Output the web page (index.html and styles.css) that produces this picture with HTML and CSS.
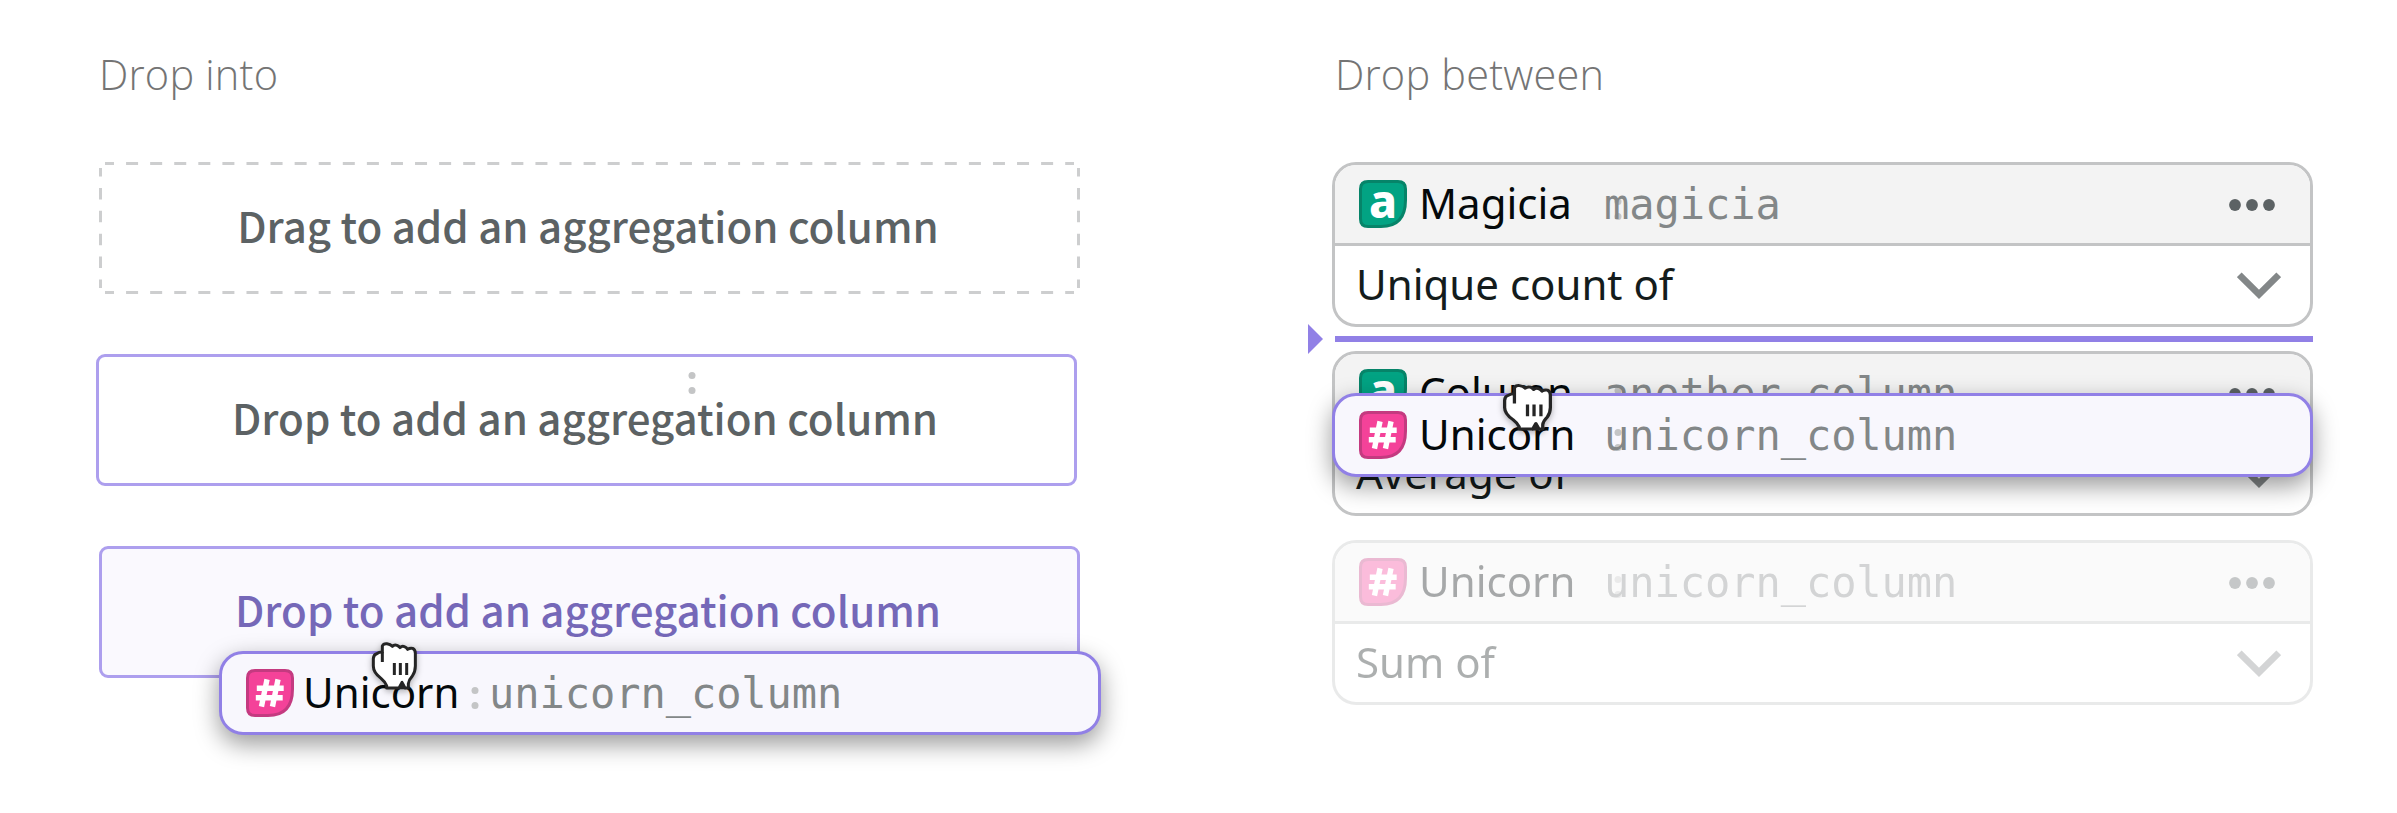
FILE: index.html
```html
<!DOCTYPE html>
<html lang="en">
<head>
<meta charset="utf-8">
<title>Drag and drop states</title>
<link rel="stylesheet" href="styles.css">
</head>
<body>
<svg class="defs" aria-hidden="true">
  <symbol id="hash" viewBox="0 0 48 48">
    <path d="M9 1.5H39Q46.5 1.5 46.5 9V20Q46.500 46.500 22 46.500H9Q1.500 46.500 1.500 39V9Q1.500 1.500 9 1.500Z" fill="#f44299" stroke="#c43a80" stroke-width="3"/>
    <path d="M20.500 13 16 35M31.500 13 27 35M13.500 19.300H35M12.500 28.700H34" fill="none" stroke="#fff" stroke-width="5.400" stroke-linecap="square" stroke-linejoin="round"/>
  </symbol>
  <symbol id="leaf" viewBox="0 0 48 48">
    <path d="M9 1.500H39Q46.500 1.500 46.500 9V20Q46.500 46.500 22 46.500H9Q1.500 46.500 1.500 39V9Q1.500 1.500 9 1.500Z" fill="#02a383" stroke="#068469" stroke-width="3"/>
  </symbol>
  <symbol id="dots" viewBox="0 0 46 12">
    <circle cx="6" cy="6" r="5.900"/><circle cx="23" cy="6" r="5.900"/><circle cx="40" cy="6" r="5.900"/>
  </symbol>
  <symbol id="chevron" viewBox="0 0 44 28">
    <path d="M2.300 2.800 22 22.300 41.700 2.800" fill="none" stroke="#838788" stroke-width="6.600"/>
  </symbol>
  <symbol id="colon" viewBox="0 0 8 24">
    <circle cx="4" cy="4.500" r="3.500"/><circle cx="4" cy="19.500" r="3.500"/>
  </symbol>
  <symbol id="fist" viewBox="870 330 146 156" preserveAspectRatio="none">
    <path d="M907 366V348Q910 340 921 341Q931 342 937 349Q943 343 951 346Q956 348 960 353Q966 347 973 350Q979 352 983 358Q990 353 998 355Q1006 359 1006 370V408Q1006 425 997 438Q986 450 985 461V474H975L966 457L957 474H920V467Q916 456 903 445Q880 428 880 408V386Q881 373 890 371Q897 366 907 366Z" fill="#fff" stroke="#252525" stroke-width="9" stroke-linejoin="round"/>
    <path d="M907 366V396M943 399V435M961 399V435M980 399V435" fill="none" stroke="#252525" stroke-width="9"/>
    <path d="M955 478 966 456 977 478Z" fill="#252525"/>
  </symbol>
</svg>
<main class="board">
  <section class="into">
    <h2 class="heading heading-into">Drop into</h2>
    <div class="zone zone-idle">
      <svg class="dashes" viewBox="0 0 981 132" fill="none" stroke="#cdcecf" stroke-width="3">
        <path d="M6 1.500H975M6 130.500H975" stroke-dasharray="12 12.080" stroke-dashoffset="3"/>
        <path d="M1.500 6V126M979.500 6V126" stroke-dasharray="11.500 11.400" stroke-dashoffset="3"/>
      </svg>
      Drag to add an aggregation column
    </div>
    <div class="zone zone-ready">
      <svg class="stray"><use href="#colon"/></svg>
      Drop to add an aggregation column
    </div>
    <div class="zone zone-over">
      Drop to add an aggregation column
      <div class="chip chip-into">
        <svg class="icon"><use href="#hash"/></svg>
        <span class="name">Unicorn</span>
        <svg class="colon"><use href="#colon"/></svg>
        <span class="code">unicorn_column</span>
        <svg class="fist"><use href="#fist"/></svg>
      </div>
    </div>
  </section>
  <section class="between">
    <h2 class="heading heading-between">Drop between</h2>
    <article class="card">
      <header class="head">
        <span class="icon letter"><svg class="icon"><use href="#leaf"/></svg><b class="glyph">a</b></span>
        <span class="name">Magicia</span>
        <svg class="colon"><use href="#colon"/></svg>
        <span class="code">magicia</span>
        <svg class="dots"><use href="#dots"/></svg>
      </header>
      <div class="agg">Unique count of<svg class="chevron"><use href="#chevron"/></svg></div>
    </article>
    <div class="marker"><svg class="arrow" viewBox="0 0 15 30"><path d="M0 0 15 15 0 30Z" fill="#9180e6"/></svg></div>
    <article class="card">
      <header class="head">
        <span class="icon letter"><svg class="icon"><use href="#leaf"/></svg><b class="glyph">a</b></span>
        <span class="name">Column</span>
        <svg class="colon"><use href="#colon"/></svg>
        <span class="code">another_column</span>
        <svg class="dots"><use href="#dots"/></svg>
      </header>
      <div class="agg">Average of<svg class="chevron"><use href="#chevron"/></svg></div>
      <div class="chip chip-between">
        <svg class="icon"><use href="#hash"/></svg>
        <span class="name">Unicorn</span>
        <svg class="colon"><use href="#colon"/></svg>
        <span class="code">unicorn_column</span>
        <svg class="fist"><use href="#fist"/></svg>
      </div>
    </article>
    <article class="card card-faded">
      <header class="head">
        <svg class="icon"><use href="#hash"/></svg>
        <span class="name">Unicorn</span>
        <svg class="colon"><use href="#colon"/></svg>
        <span class="code">unicorn_column</span>
        <svg class="dots"><use href="#dots"/></svg>
      </header>
      <div class="agg">Sum of<svg class="chevron"><use href="#chevron"/></svg></div>
    </article>
  </section>
</main>
</body>
</html>
```
FILE: styles.css
```css
* { box-sizing: border-box; }
body {
  margin: 0;
  background: #fff;
  font-family: "Noto Sans", sans-serif;
  font-size: 42px;
  color: #04090b;
}
svg { display: block; overflow: visible; flex: none; }
.defs { position: absolute; width: 0; height: 0; }
.board {
  display: grid;
  grid-template-columns: 981px 981px;
  column-gap: 252px;
  height: 813px;
  padding: 44px 0 0 99px;
}
.heading {
  height: 60px;
  margin: 0 0 58px;
  font: 300 41.5px/60px "Open Sans", sans-serif;
  letter-spacing: .2px;
  color: #747474;
  white-space: nowrap;
}
.heading-between { padding-left: 3px; }

.zone {
  position: relative;
  display: flex;
  align-items: center;
  justify-content: center;
  height: 132px;
  margin-bottom: 60px;
  padding: 0 3px 6px 0;
  border-radius: 9px;
  font: 500 42px/60px "Noto Sans CJK SC", sans-serif;
  color: #5c6264;
  white-space: nowrap;
}
.dashes { position: absolute; inset: 0; width: 981px; height: 132px; }
.zone-ready { margin-left: -3px; margin-right: 3px; border: 3px solid #ad9fee; }
.zone-over { border: 3px solid #ad9fee; background: #faf9fe; color: #7568b8; }
.stray { position: absolute; left: 588.500px; top: 13.500px; width: 8px; height: 24px; fill: #c4c5c6; }

.card {
  position: relative;
  height: 165px;
  border: 3px solid #c3c4c5;
  border-radius: 24px;
  background: #fff;
}
.card-faded { margin-top: 24px; opacity: .35; }
.head {
  position: relative;
  display: flex;
  align-items: center;
  height: 81px;
  padding: 0 35px 0 24px;
  border-bottom: 3px solid #c3c4c5;
  border-radius: 21px 21px 0 0;
  background: #f3f3f3;
}
.icon { width: 48px; height: 48px; flex: none; }
.letter { position: relative; }
.glyph {
  position: absolute;
  inset: 0;
  font: 800 46px/40px "Noto Sans", sans-serif;
  text-align: center;
  color: #fff;
}
.name { width: 185px; margin: -2px 0 0 12px; font-size: 42px; line-height: 60px; white-space: nowrap; }
.colon { width: 8px; height: 24px; margin: 10px -18px 0 10px; fill: #c4c5c6; }
.code {
  flex: 1;
  position: relative;
  margin-top: 1px;
  font: 42px/60px "DejaVu Sans Mono", monospace;
  letter-spacing: -.05px;
  color: #838788;
  white-space: nowrap;
}
.dots { width: 46px; height: 12px; margin-top: 2px; fill: #5c6264; }
.agg {
  display: flex;
  align-items: center;
  justify-content: space-between;
  height: 78px;
  padding: 0 29px 2px 21px;
  line-height: 60px;
  color: #141c1c;
}
.chevron { width: 44px; height: 28px; margin-top: 4px; }

.marker { position: relative; height: 6px; margin: 9px 0 9px 3px; background: #9180e6; }
.arrow { position: absolute; left: -27px; top: -12px; width: 15px; height: 30px; }

.chip {
  position: absolute;
  z-index: 1;
  display: flex;
  align-items: center;
  height: 84px;
  padding-left: 24px;
  border: 3px solid #9180e6;
  border-radius: 24px;
  background: #f8f7fd;
  box-shadow: 0 9px 24px rgba(0, 0, 0, .4);
  color: #04090b;
}
.chip .name { font-family: "Noto Sans", sans-serif; font-weight: 400; }
.chip-into { left: 117px; top: 102px; width: 882px; }
.chip-into .name { margin-left: 9px; width: 161px; }
.chip-into .colon { margin: 9px 10px 0 7px; }
.chip-between { left: -3px; top: 39px; width: 981px; }
.fist {
  position: absolute;
  top: -14px;
  left: 148px;
  width: 48.700px;
  height: 52px;
  filter: drop-shadow(0 2px 3px rgba(0, 0, 0, .3));
}
.chip-between .fist { left: 165.500px; top: -14px; width: 53px; height: 51px; }
```
